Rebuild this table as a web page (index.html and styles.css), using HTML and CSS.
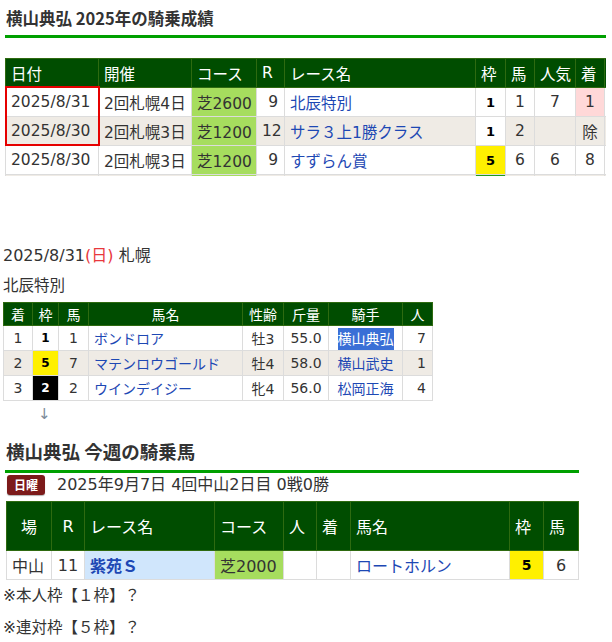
FILE: index.html
```html
<!DOCTYPE html>
<html lang="ja">
<head>
<meta charset="utf-8">
<title>横山典弘</title>
<link rel="stylesheet" href="styles.css">
</head>
<body>
<section class="record">
  <h2 class="title title-sm">横山典弘 2025年の騎乗成績</h2>
  <div class="scroll">
    <table class="t1">
      <colgroup>
        <col class="w93"><col class="w93"><col class="w65"><col class="w28"><col class="w191"><col class="w30"><col class="w29"><col class="w41"><col class="w29"><col class="w60">
      </colgroup>
      <thead>
        <tr><th>日付</th><th>開催</th><th>コース</th><th>R</th><th>レース名</th><th>枠</th><th>馬</th><th>人気</th><th>着</th><th></th></tr>
      </thead>
      <tbody>
        <tr><td>2025/8/31</td><td>2回札幌4日</td><td class="turf">芝2600</td><td class="r">9</td><td><a class="link">北辰特別</a></td><td class="waku w-1">1</td><td class="c">1</td><td class="c">7</td><td class="c win">1</td><td></td></tr>
        <tr class="alt"><td>2025/8/30</td><td>2回札幌3日</td><td class="turf">芝1200</td><td class="r">12</td><td><a class="link">サラ３上1勝クラス</a></td><td class="waku w-1">1</td><td class="c">2</td><td class="c"></td><td class="c">除</td><td></td></tr>
        <tr><td>2025/8/30</td><td>2回札幌3日</td><td class="turf">芝1200</td><td class="r">9</td><td><a class="link">すずらん賞</a></td><td class="waku w-5">5</td><td class="c">6</td><td class="c">6</td><td class="c">8</td><td></td></tr>
        <tr class="alt"><td></td><td></td><td class="turf"></td><td></td><td></td><td class="waku w-6"></td><td></td><td></td><td></td><td></td></tr>
      </tbody>
    </table>
    <div class="mark"></div>
  </div>
</section>

<section class="race">
  <p class="race-date">2025/8/31<span class="sun">(日)</span> 札幌</p>
  <p class="race-name">北辰特別</p>
  <table class="t2">
    <colgroup>
      <col class="w29"><col class="w26"><col class="w30"><col class="w154"><col class="w41"><col class="w45"><col class="w74"><col class="w30">
    </colgroup>
    <thead>
      <tr><th>着</th><th>枠</th><th>馬</th><th>馬名</th><th>性齢</th><th>斤量</th><th>騎手</th><th>人</th></tr>
    </thead>
    <tbody>
      <tr><td class="c">1</td><td class="waku w-1">1</td><td class="c">1</td><td><a class="link">ボンドロア</a></td><td class="c">牡3</td><td class="c">55.0</td><td class="c"><a class="link sel">横山典弘</a></td><td class="r">7</td></tr>
      <tr class="alt"><td class="c">2</td><td class="waku w-5">5</td><td class="c">7</td><td><a class="link">マテンロウゴールド</a></td><td class="c">牡4</td><td class="c">58.0</td><td class="c"><a class="link">横山武史</a></td><td class="r">1</td></tr>
      <tr><td class="c">3</td><td class="waku w-2">2</td><td class="c">2</td><td><a class="link">ウインデイジー</a></td><td class="c">牝4</td><td class="c">56.0</td><td class="c"><a class="link">松岡正海</a></td><td class="r">4</td></tr>
    </tbody>
  </table>
  <div class="arrow">↓</div>
</section>

<section class="week">
  <h2 class="title title-lg">横山典弘 今週の騎乗馬</h2>
  <div class="day">
    <span class="badge">日曜</span>
    <span class="day-text">2025年9月7日 4回中山2日目 0戦0勝</span>
  </div>
  <table class="t3">
    <colgroup>
      <col class="w45"><col class="w33"><col class="w130"><col class="w69"><col class="w33"><col class="w34"><col class="w159"><col class="w34"><col class="w35">
    </colgroup>
    <thead>
      <tr><th class="c">場</th><th class="c">R</th><th>レース名</th><th>コース</th><th>人</th><th>着</th><th>馬名</th><th>枠</th><th>馬</th></tr>
    </thead>
    <tbody>
      <tr><td>中山</td><td class="c">11</td><td class="grade"><a class="link strong">紫苑Ｓ</a></td><td class="turf">芝2000</td><td></td><td></td><td><a class="link">ロートホルン</a></td><td class="waku w-5">5</td><td class="c">6</td></tr>
    </tbody>
  </table>
</section>

<div class="notes">
  <p class="note">※本人枠【１枠】？</p>
  <p class="note">※連対枠【５枠】？</p>
</div>
</body>
</html>
```

FILE: styles.css
```css
* { box-sizing: border-box; }

body {
  margin: 0;
  font-family: "DejaVu Sans", "Noto Sans CJK JP", sans-serif;
  color: #333;
  background: #fff;
}

p { margin: 0; }

.title {
  margin: 0;
  font-family: "Noto Sans CJK JP", sans-serif;
  font-weight: bold;
  color: #333;
  border-bottom: 3px solid #00a000;
}

.title-sm {
  font-size: 16.5px;
  line-height: 22px;
  padding: 7px 0 6px 1px;
}

.title-lg {
  font-size: 18.5px;
  line-height: 24px;
  padding: 15px 0 7px 1px;
}

/* generic table */
table {
  border-collapse: collapse;
  table-layout: fixed;
}

th {
  background: #004d00;
  color: #fff;
  font-weight: normal;
  text-align: left;
  border: 1px solid #2e6a10;
  padding: 0 5px;
  white-space: nowrap;
}

td {
  border: 1px solid #dcdcdc;
  padding: 0 5px;
  white-space: nowrap;
  background: #fff;
}

tr.alt td { background: #efebe5; }

td.c, th.c { text-align: center; }
td.r { text-align: right; padding-right: 6px; }

td.turf, tr.alt td.turf { background: #a6dd5e; }
td.win { background: #ffd8d8; }
td.grade { background: #d0e6fc; }

.link { color: #1d48b4; text-decoration: none; }
.strong { font-weight: bold; }

.waku {
  text-align: center;
  font-weight: bold;
  font-size: 13px;
  color: #000;
}
td.w-1, tr.alt td.w-1 { background: #fff; }
td.w-2, tr.alt td.w-2 { background: #000; color: #fff; }
td.w-5, tr.alt td.w-5 { background: #fff000; }
td.w-6, tr.alt td.w-6 { background: #1f9a1f; color: #fff; }

/* column widths */
.w26 { width: 26px; }
.w28 { width: 28px; }
.w29 { width: 29px; }
.w30 { width: 30px; }
.w33 { width: 33px; }
.w34 { width: 34px; }
.w35 { width: 35px; }
.w41 { width: 41px; }
.w45 { width: 45px; }
.w60 { width: 60px; }
.w65 { width: 65px; }
.w69 { width: 69px; }
.w74 { width: 74px; }
.w93 { width: 93px; }
.w130 { width: 130px; }
.w154 { width: 154px; }
.w159 { width: 159px; }
.w191 { width: 191px; }

/* section 1 */
.record {
  margin-left: 5px;
  width: 601px;
}

.scroll {
  position: relative;
  margin-top: 20px;
  height: 118px;
  overflow: hidden;
}

.t1 {
  width: 659px;
  font-size: 15.5px;
}
.t1 th, .t1 td { height: 29px; }

.mark {
  position: absolute;
  left: 0;
  top: 28px;
  width: 95px;
  height: 60px;
  border: 2px solid #e60000;
}

/* section 2 */
.race {
  margin-left: 3px;
  margin-top: 69px;
}

.race-date {
  font-size: 16px;
  line-height: 22px;
}

.race-name {
  margin-top: 8px;
  font-size: 15.5px;
  line-height: 22px;
}

.sun { color: #e8383d; }

.t2 {
  width: 429px;
  margin-top: 5px;
  font-size: 14px;
}
.t2 th { height: 23px; text-align: center; }
.t2 td { height: 25px; }
.t2 .waku { font-size: 12px; }

.sel {
  background: #3a6fd6;
  color: #fff;
  padding: 3px 0;
}

.arrow {
  margin-top: 3px;
  padding-left: 35px;
  font-size: 15px;
  line-height: 20px;
  color: #7d8b99;
}

/* section 3 */
.week {
  margin-left: 5px;
  width: 574px;
}

.day {
  display: flex;
  align-items: center;
  margin-top: 2px;
  height: 20px;
}

.badge {
  width: 38px;
  height: 20px;
  margin-left: 2px;
  border-radius: 3px;
  background: #7c1a1a;
  color: #fff;
  font-family: "Noto Sans CJK JP", sans-serif;
  font-weight: bold;
  font-size: 12px;
  line-height: 20px;
  text-align: center;
  box-shadow: 0 1px 1px rgba(0, 0, 0, 0.3);
}

.day-text {
  margin-left: 12px;
  font-size: 16px;
  line-height: 20px;
}

.t3 {
  width: 572px;
  margin-top: 6px;
  margin-left: 1px;
  font-size: 16px;
}
.t3 th { height: 49px; }
.t3 td { height: 29px; }
.t3 .waku { font-size: 14px; }

/* notes */
.notes { margin-left: 3px; }

.note {
  font-size: 15.5px;
  line-height: 32px;
}
```
